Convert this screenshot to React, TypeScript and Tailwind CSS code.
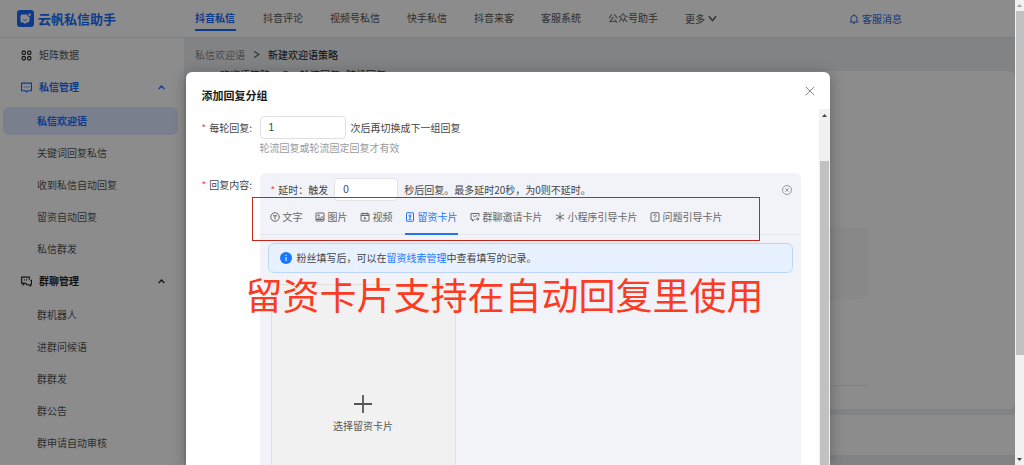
import { ReactNode, SVGProps } from 'react';
import clsx from 'clsx';

const topNav = ['抖音私信', '抖音评论', '视频号私信', '快手私信', '抖音来客', '客服系统', '公众号助手'];

const messageItems = ['私信欢迎语', '关键词回复私信', '收到私信自动回复', '留资自动回复', '私信群发'];
const groupItems = ['群机器人', '进群问候语', '群群发', '群公告', '群申请自动审核'];

function Icon({ children, className = 'size-[10px]', ...props }: SVGProps<SVGSVGElement>) {
    return (
        <svg
            viewBox="0 0 20 20"
            fill="none"
            stroke="currentColor"
            strokeWidth={2}
            className={clsx('shrink-0', className)}
            aria-hidden="true"
            {...props}
        >
            {children}
        </svg>
    );
}

const tabs: { label: string; icon: ReactNode }[] = [
    {
        label: '文字',
        icon: <Icon><circle cx="10" cy="10" r="8.5" /><path d="M6 7.5h8M10 7.5V15" /></Icon>,
    },
    {
        label: '图片',
        icon: <Icon><rect x="2" y="2" width="16" height="16" rx="1" /><circle cx="7" cy="7" r="1.5" /><path d="M3 16l5-5 3 2 3-4 3 4M3 15h14" /></Icon>,
    },
    {
        label: '视频',
        icon: <Icon><rect x="2" y="3" width="16" height="15" rx="1" /><path d="M2 7h16M6 1v5M14 1v5" /><path d="M8 9.5v6l5-3z" fill="currentColor" stroke="none" /></Icon>,
    },
    {
        label: '留资卡片',
        icon: <Icon><rect x="3" y="1.5" width="14" height="17" rx="1" /><circle cx="10" cy="7.5" r="2" /><path d="M10 9.5V13M7 14.5h6" /></Icon>,
    },
    {
        label: '群聊邀请卡片',
        icon: <Icon><path d="M18 9V3H2v12h3v3l4-3M6 7l3 2 5-2" /><path d="M11 14h7M15 11l3 3-3 3" /></Icon>,
    },
    {
        label: '小程序引导卡片',
        icon: <Icon><path d="M10 1v18M2 5.5l16 9M18 5.5l-16 9" /></Icon>,
    },
    {
        label: '问题引导卡片',
        icon: <Icon><rect x="2" y="1.5" width="16" height="17" rx="1" /><path d="M7.5 8c0-4 5-3.500 5-.5 0 2-2.500 2-2.500 4.500M10 13.500v2" /></Icon>,
    },
];

function Header() {
    return (
        <header className="flex h-[38px] shrink-0 items-center border-b border-[#e4e4e4] bg-white">
            <div className="flex w-[195px] shrink-0 items-center gap-1 pl-[17px] text-[#1a6bff]">
                <svg viewBox="0 0 34 34" className="size-[17px]" aria-hidden="true">
                    <rect width="34" height="34" rx="6" fill="currentColor" />
                    <path d="M10 9h10a6 6 0 0 0 5 5v7a4 4 0 0 1-4 4h-2l-3 3-3-3h-2a4 4 0 0 1-4-4v-8a4 4 0 0 1 3-4z" fill="#fff" />
                    <circle cx="25" cy="9.500" r="2.500" fill="#fff" />
                    <path d="M12 19q4 4 8 0" fill="none" stroke="currentColor" strokeWidth="1.500" />
                </svg>
                <span className="text-[13px] font-bold whitespace-nowrap">云帆私信助手</span>
            </div>
            <nav className="flex h-full items-center gap-[27px] whitespace-nowrap text-[#555]">
                {topNav.map((label, i) => (
                    <a
                        key={label}
                        href="#"
                        className={clsx(
                            'flex h-6 items-center border-b-2',
                            i === 0 ? 'border-[#1a6bff] pr-px font-bold text-[#1a6bff]' : 'border-transparent',
                        )}
                    >
                        {label}
                    </a>
                ))}
                <button type="button" className="flex items-center gap-[3px]">
                    更多
                    <Icon className="size-[9px]" strokeWidth={3}><path d="M2 5l8 10 8-10" /></Icon>
                </button>
            </nav>
            <a href="#" className="mr-[113px] ml-auto flex items-center gap-[3px] whitespace-nowrap text-[#2468e8]">
                <Icon><path d="M4 16V9a6 6 0 0 1 12 0v7M1.500 16h17M10 1v2M8 18.500h4" /></Icon>
                客服消息
            </a>
        </header>
    );
}

function MenuGroup({ icon, title, items, current, active }: {
    icon: ReactNode;
    title: string;
    items: string[];
    current?: string;
    active?: boolean;
}) {
    return (
        <div>
            <button
                type="button"
                className={clsx(
                    'flex h-8 w-full items-center gap-[7px] pr-[19px] pl-[21px] font-bold',
                    active ? 'text-[#1a6bff]' : 'text-[#222]',
                )}
            >
                {icon}
                {title}
                <Icon className="ml-auto size-[7px]" strokeWidth={4}><path d="M2 14l8-8 8 8" /></Icon>
            </button>
            <ul className="mt-1 flex flex-col gap-1 pr-1.5 pl-[3px]">
                {items.map((item) => (
                    <li key={item}>
                        <a
                            href="#"
                            className={clsx(
                                'flex h-7 items-center rounded-md pl-[34px]',
                                item === current ? 'bg-[#dce7ff] font-bold text-[#1a6bff]' : 'text-[#555]',
                            )}
                        >
                            {item}
                        </a>
                    </li>
                ))}
            </ul>
        </div>
    );
}

function Sidebar() {
    return (
        <aside className="flex w-[184px] shrink-0 flex-col gap-0.5 overflow-hidden bg-white pt-px">
            <div>
                <a href="#" className="flex h-8 items-center gap-[7px] pl-[21px] text-[#555]">
                    <Icon className="size-[11px] text-[#222]">
                        <rect x="2" y="2" width="6" height="6" rx="2" />
                        <rect x="12" y="2" width="6" height="6" rx="2" />
                        <rect x="2" y="12" width="6" height="6" rx="2" />
                        <rect x="12" y="12" width="6" height="6" rx="2" />
                    </Icon>
                    矩阵数据
                </a>
                <MenuGroup
                    active
                    title="私信管理"
                    current="私信欢迎语"
                    items={messageItems}
                    icon={
                        <Icon className="size-[11px]">
                            <path d="M1 2h18v14h-7l-2 2-2-2H1z" />
                            <path d="M5 9h2M9 9h2M13 9h2" />
                        </Icon>
                    }
                />
            </div>
            <MenuGroup
                title="群聊管理"
                items={groupItems}
                icon={
                    <Icon className="size-[11px]">
                        <path d="M15 7V2H1v11h3v3l3-3h2" />
                        <path d="M5 7h2M9 7h2M17 8h2v8h-2v2l-3-2h-4v-3" />
                    </Icon>
                }
            />
        </aside>
    );
}

function StrategyPage() {
    return (
        <main className="flex min-w-0 flex-1 flex-col bg-[#ebeef1]">
            <div className="flex h-[33px] shrink-0 items-center gap-2 pl-[11px]">
                <a href="#" className="text-[#888]">私信欢迎语</a>
                <Icon className="size-[7px] text-[#555]" strokeWidth={3}><path d="M3 1l14 9-14 9" /></Icon>
                <span className="text-[#111]">新建欢迎语策略</span>
            </div>
            <section className="ml-[5px] flex-1 rounded-md bg-white pr-[147px]">
                {/* first form row, scrolled up under the breadcrumb */}
                <div className="-mt-1 flex h-4 items-center pl-[31px] whitespace-nowrap text-[#333]">
                    <span className="w-[61px]">欢迎语策略</span>
                    <span className="mr-2.5 size-[9px] rounded-full bg-[#1a6bff]" />
                    <span className="w-[46px]">轮流回复</span>
                    <span>随机回复</span>
                </div>
                <div className="h-[144px]" />
                <div className="h-[72px] rounded-md bg-[#f7f7f7]" />
                <div className="h-[87px] border-b border-[#ececec]" />
            </section>
            <footer className="mt-1.5 mb-2.5 ml-[5px] h-10 shrink-0 bg-white" />
        </main>
    );
}

function Required() {
    return <span className="mr-[3px] text-[#f5483b]">*</span>;
}

function ReplyGroupDialog() {
    return (
        <div
            role="dialog"
            aria-labelledby="dialog-title"
            className="relative flex w-[644px] max-w-full flex-col overflow-hidden rounded-t-md bg-white text-[#444] shadow-[0_2px_14px_rgba(0,0,0,0.3)]"
        >
            <div className="flex h-[37px] shrink-0 items-start justify-between pr-[15px] pl-4">
                <h2 id="dialog-title" className="pt-[17px] text-[11px] leading-3 font-bold text-[#1a1a1a]">添加回复分组</h2>
                <button type="button" aria-label="关闭" className="pt-3.5 text-[#888]">
                    <Icon><path d="M1.500 1.500l17 17M18.500 1.500l-17 17" /></Icon>
                </button>
            </div>
            <div className="flex min-h-0 flex-1">
                <form className="min-w-0 flex-1 overflow-hidden pt-[7px] pr-[18px] pl-4">
                    <div className="flex">
                        <label htmlFor="rounds" className="flex h-[23px] w-[58px] shrink-0 items-center">
                            <Required />每轮回复:
                        </label>
                        <div>
                            <div className="flex items-center gap-[5px]">
                                <input
                                    id="rounds"
                                    defaultValue="1"
                                    className="h-[23px] w-[86px] rounded border border-[#dfdfdf] px-2 font-['Liberation_Sans',sans-serif]"
                                />
                                次后再切换成下一组回复
                            </div>
                            <p className="leading-[18px] text-[#999]">轮流回复或轮流固定回复才有效</p>
                        </div>
                    </div>
                    <div className="mt-4 flex">
                        <div className="flex h-[23px] w-[58px] shrink-0 items-center">
                            <Required />回复内容:
                        </div>
                        <div className="min-w-0 flex-1 rounded-t-md bg-[#f2f3f8] pt-[5px]">
                            <div className="flex items-center gap-1.5 pr-[9px] pl-[11px]">
                                <label htmlFor="delay"><Required />延时：触发</label>
                                <input
                                    id="delay"
                                    defaultValue="0"
                                    className="h-[23px] w-16 rounded border border-[#e4e4e4] bg-white px-2 font-['Liberation_Sans',sans-serif]"
                                />
                                秒后回复。最多延时20秒，为0则不延时。
                                <button type="button" aria-label="删除" className="ml-auto text-[#999]">
                                    <Icon><circle cx="10" cy="10" r="9" /><path d="M6.500 6.500l7 7M13.500 6.500l-7 7" /></Icon>
                                </button>
                            </div>
                            <div role="tablist" className="flex h-[34px] gap-3 border-b border-[#e6e8ee] pl-2.5 text-[#666]">
                                {tabs.map(({ label, icon }) => (
                                    <button
                                        key={label}
                                        type="button"
                                        role="tab"
                                        aria-selected={label === '留资卡片'}
                                        className={clsx(
                                            '-mb-px flex items-center gap-[3px] border-b-2 whitespace-nowrap',
                                            label === '留资卡片' ? 'border-[#1f74f0] text-[#1f74f0]' : 'border-transparent',
                                        )}
                                    >
                                        {icon}
                                        {label}
                                    </button>
                                ))}
                            </div>
                            <div className="mx-2 mt-2 flex h-[30px] items-center gap-[5px] rounded-md border border-[#bcd6fa] bg-[#e7f1ff] pl-[11px]">
                                <svg viewBox="0 0 24 24" className="size-3" aria-hidden="true">
                                    <circle cx="12" cy="12" r="12" fill="#1677ff" />
                                    <path d="M12 5.500v2.500M12 10v8" stroke="#fff" strokeWidth="2" />
                                </svg>
                                <p>粉丝填写后，可以在<a href="#" className="text-[#1677ff]">留资线索管理</a>中查看填写的记录。</p>
                            </div>
                            <button
                                type="button"
                                className="mt-[11px] ml-[11px] flex h-[258px] w-[185px] flex-col items-center justify-center gap-[7px] rounded-sm border border-[#e0e0e0] bg-[#f1f1f1] text-[#555]"
                            >
                                <Icon className="size-[18px]"><path d="M10 0v20M0 10h20" /></Icon>
                                <span className="leading-3">选择留资卡片</span>
                            </button>
                        </div>
                    </div>
                </form>
                <div className="flex w-[11px] shrink-0 flex-col items-center bg-[#f1f1f1]">
                    <svg viewBox="0 0 10 6" className="mt-[5px] h-[3px] w-[5px]" aria-hidden="true">
                        <path d="M5 0l5 6H0z" fill="#444" />
                    </svg>
                    <div className="mt-11 w-[9px] flex-1 bg-[#c1c1c1]" />
                </div>
            </div>

            {/* callout drawn over the tab row */}
            <div className="pointer-events-none absolute top-[125px] left-[66px] h-11 w-[508px] border border-[#c8261b]" />
            <p className="pointer-events-none absolute top-[199px] left-[60px] text-[37px] leading-[46px] whitespace-nowrap text-[#fb3b23]">
                留资卡片支持在自动回复里使用
            </p>
        </div>
    );
}

export default function App() {
    return (
        <div className="flex h-screen overflow-hidden bg-white font-['Noto_Sans_CJK_SC','Liberation_Sans',sans-serif] text-[10px] leading-4">
            <div className="relative flex min-w-0 flex-1 flex-col">
                <Header />
                <div className="flex min-h-0 flex-1">
                    <Sidebar />
                    <StrategyPage />
                </div>
                <div className="absolute inset-0 flex justify-center bg-black/45 pt-[72px]">
                    <ReplyGroupDialog />
                </div>
            </div>
            <div className="flex w-[9px] shrink-0 flex-col items-center bg-[#f1f1f1] pb-1">
                <svg viewBox="0 0 10 6" className="my-1 h-[3px] w-[5px] shrink-0" aria-hidden="true">
                    <path d="M5 0l5 6H0z" fill="#a3a3a3" />
                </svg>
                <div className="w-2 flex-[10] bg-[#c1c1c1]" />
                <div className="flex-[3]" />
                <svg viewBox="0 0 10 6" className="h-[3px] w-[5px] shrink-0" aria-hidden="true">
                    <path d="M5 6l5-6H0z" fill="#444" />
                </svg>
            </div>
        </div>
    );
}
